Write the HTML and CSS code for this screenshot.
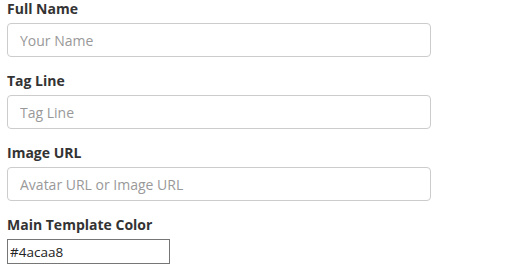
FILE: index.html
```html
<!DOCTYPE html>
<html lang="en">
<head>
    <meta charset="UTF-8">
    <title>Profile Settings</title>
    <link rel="stylesheet" href="styles.css">
</head>
<body>
    <form class="profile-form">
        <!-- Basic info -->
        <div class="form-group">
            <label for="fullName">Full Name</label>
            <input type="text" id="fullName" class="form-control" placeholder="Your Name">
        </div>

        <div class="form-group">
            <label for="tagLine">Tag Line</label>
            <input type="text" id="tagLine" class="form-control" placeholder="Tag Line">
        </div>

        <div class="form-group">
            <label for="imageUrl">Image URL</label>
            <input type="text" id="imageUrl" class="form-control" placeholder="Avatar URL or Image URL">
        </div>

        <!-- Theme -->
        <div class="form-group">
            <label for="mainColor">Main Template Color</label>
            <input type="text" id="mainColor" class="color-input" value="#4acaa8">
        </div>
    </form>
</body>
</html>
```

FILE: styles.css
```css
/* General body styling */
body {
    margin: 0;
    background-color: #fff;
    font-family: "Open Sans", Arial, sans-serif;
    font-size: 14px;
    color: #333;
}

.profile-form {
    width: 424px;
    padding: 0 7px;
}

.form-group {
    margin-bottom: 15px;
}

label {
    display: block;
    font-weight: bold;
    line-height: 18px;
    margin-bottom: 5px;
}

/* Text inputs */
.form-control {
    display: block;
    width: 100%;
    height: 34px;
    padding: 6px 12px;
    font-family: inherit;
    font-size: 14px;
    color: #555;
    background-color: #fff;
    border: 1px solid #ccc;
    border-radius: 4px;
    box-sizing: border-box;
}

.form-control::placeholder {
    color: #999;
}

/* Color field */
.color-input {
    display: block;
    width: 163px;
    height: 25px;
    padding: 1px 2px;
    font-family: inherit;
    font-size: 13.5px;
    color: #222;
    border: 1px solid #767676;
    border-radius: 0;
    box-sizing: border-box;
}
```
